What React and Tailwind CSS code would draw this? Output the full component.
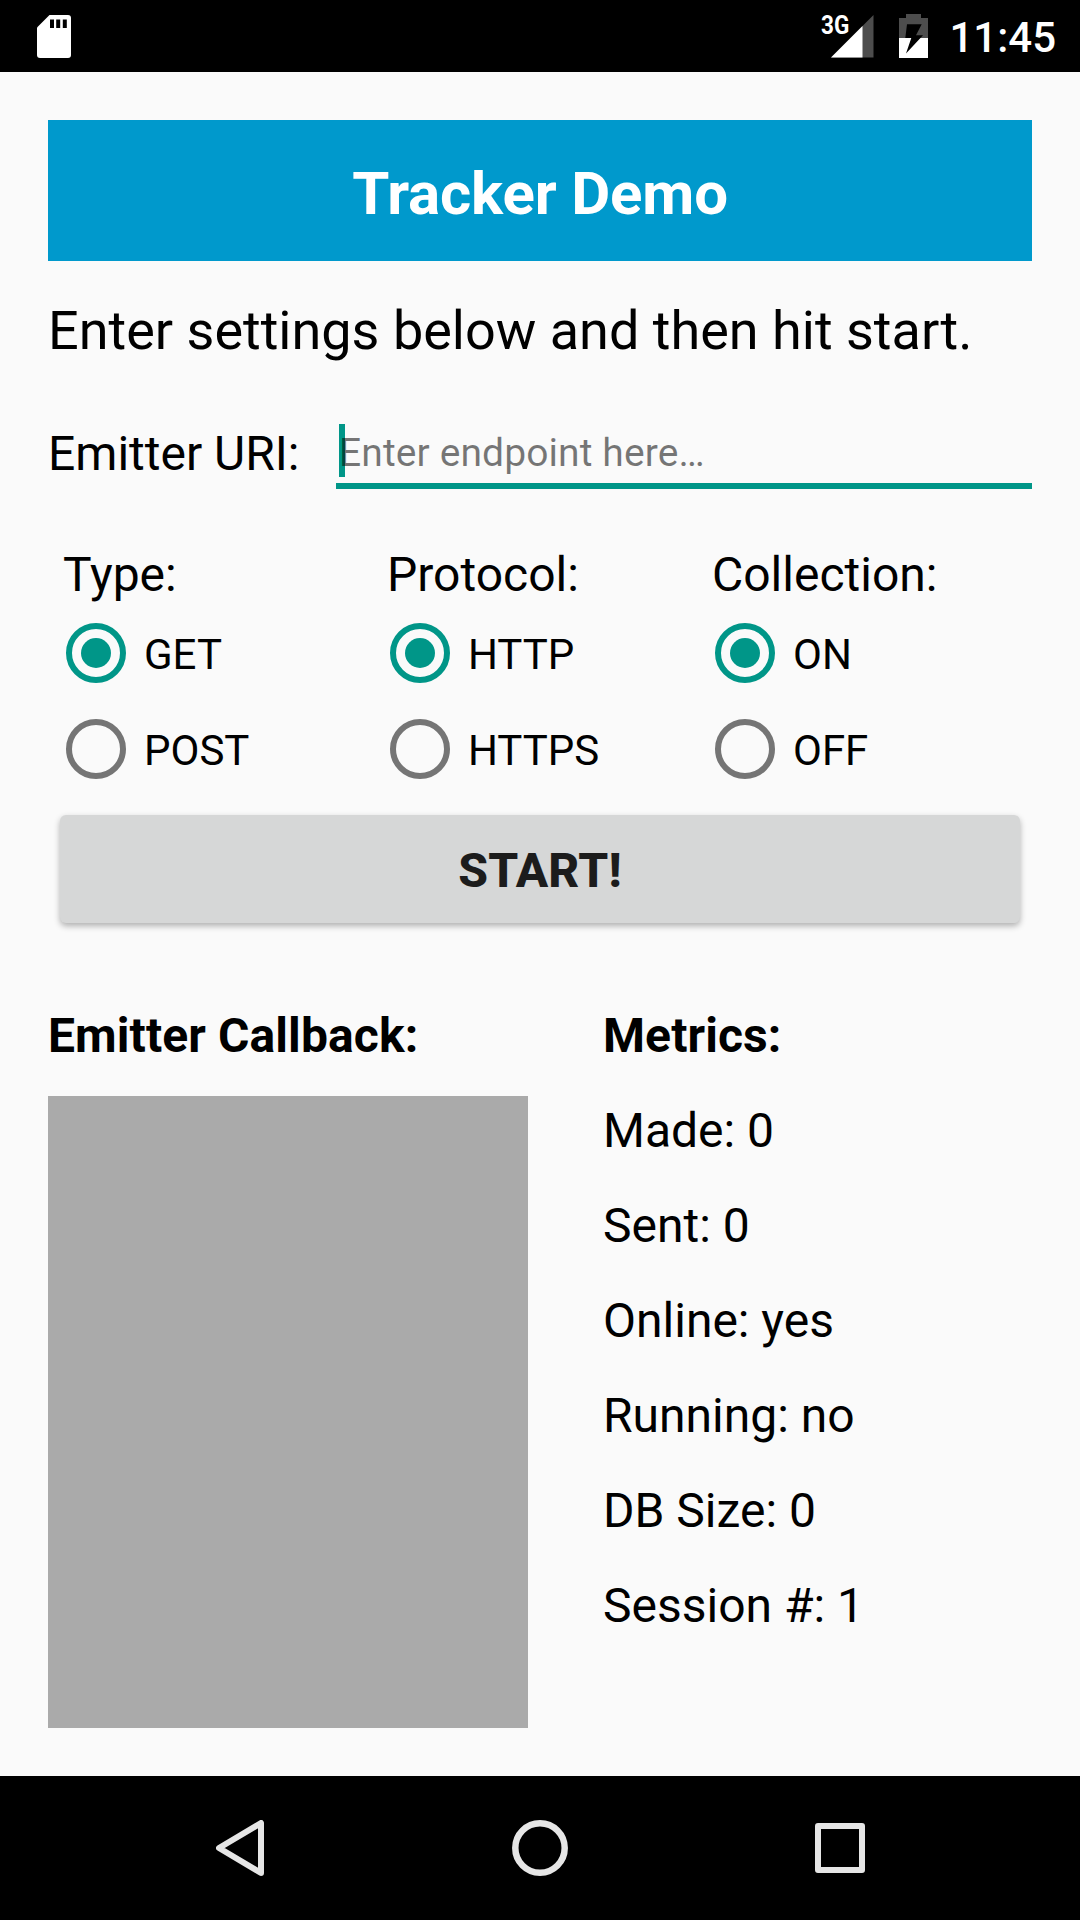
const metrics = ["Made: 0", "Sent: 0", "Online: yes", "Running: no", "DB Size: 0", "Session #: 1"];
const groups = [
  { title: "Type:", options: ["GET", "POST"] },
  { title: "Protocol:", options: ["HTTP", "HTTPS"] },
  { title: "Collection:", options: ["ON", "OFF"] },
];

function Radio({ label, checked }) {
  return (
    <div className="flex h-24 items-center">
      <svg width="96" height="96" viewBox="0 0 96 96" className={checked ? "text-[#009688]" : "text-[#757575]"}>
        <circle cx="48" cy="48" r="27" fill="none" stroke="currentColor" strokeWidth="6" />
        {checked && <circle cx="48" cy="48" r="15" fill="currentColor" />}
      </svg>
      <span className="pt-[3px] text-[42px] leading-[49px]">{label}</span>
    </div>
  );
}

function StatusBar() {
  return (
    <header className="flex h-[72px] items-center justify-between bg-black pl-[37px] pr-6 text-white">
      <svg width="34" height="43" viewBox="0 0 34 43">
        <path d="M12.5 0H31a3 3 0 0 1 3 3V40a3 3 0 0 1-3 3H3a3 3 0 0 1-3-3V12.5Z" fill="#fff" />
        <path d="M13 4.500h4v8.500h-4zM19.200 4.500h4v8.500h-4zM25.800 4.500h4v8.500h-4z" fill="#000" />
      </svg>
      <div className="flex items-center">
        <div className="flex h-[43px] w-[53px] items-start">
          <span className="w-[28px] origin-left scale-x-[0.9] whitespace-nowrap text-[25px] font-bold leading-[21px]">3G</span>
          <svg width="43" height="43" viewBox="0 0 43 43" className="-ml-[18px] shrink-0">
            <path d="M42.500 0V42.500H0Z" fill="#4d4d4d" />
            <path d="M31.500 11V42.500H0Z" fill="#fff" />
          </svg>
        </div>
        <svg width="29" height="44" viewBox="0 0 29 44" className="ml-[25px]">
          <path d="M7 0h15v4h7v20H0V4h7Z" fill="#4d4d4d" />
          <path d="M0 24h29v20H0Z" fill="#fff" />
          <path d="M8 10.300H22.700L17 21.300H24L7 39.500L12.300 24H6.300Z" fill="#000" />
        </svg>
        <span className="ml-[21px] pt-[2px] text-[42px] font-medium leading-[49px]">11:45</span>
      </div>
    </header>
  );
}

function NavBar() {
  return (
    <footer className="flex h-36 items-center bg-black pl-[216px] text-[#e6e6e6]">
      <svg width="48" height="56" viewBox="0 0 48 56" fill="none" stroke="currentColor" strokeWidth="6" strokeLinejoin="round">
        <path d="M45 3V53L3 28Z" />
      </svg>
      <svg width="56" height="56" viewBox="0 0 56 56" fill="none" stroke="currentColor" strokeWidth="6.500" className="ml-[248px]">
        <circle cx="28" cy="28" r="24.700" />
      </svg>
      <svg width="50" height="50" viewBox="0 0 50 50" fill="none" stroke="currentColor" strokeWidth="6" strokeLinejoin="round" className="ml-[247px]">
        <path d="M3 3H47V47H3Z" />
      </svg>
    </footer>
  );
}

export default function App() {
  return (
    <div className="flex h-[1920px] w-[1080px] flex-col bg-[#fafafa] font-['Roboto',sans-serif] text-black">
      <StatusBar />
      <main className="flex h-[1704px] flex-col p-12">
        <h1 className="flex h-[141px] shrink-0 items-center justify-center bg-[#0099cc] pt-[6px] text-[60px] font-bold tracking-[-0.15px] text-white">
          Tracker Demo
        </h1>
        <p className="mt-[34px] text-[54px] leading-[72px]">Enter settings below and then hit start.</p>
        <div className="mt-[42px] flex h-20">
          <span className="w-[288px] pt-[9px] text-[48px] leading-[71px]">Emitter URI:</span>
          <div className="relative flex-1 border-b-[6px] border-[#009688] pl-[3px] pt-[11px] text-[39px] leading-[66px] tracking-[0.1px] text-black/53">
            <i className="absolute left-[3px] top-[15px] h-[53px] w-[6px] bg-[#009688]" />
            <span className="relative">Enter endpoint here…</span>
          </div>
        </div>
        <div className="mt-[54px] grid grid-cols-[324px_325px_325px]">
          {groups.map((g) => (
            <div key={g.title}>
              <div className="h-[62px] pl-[15px] text-[48px] leading-[64px]">{g.title}</div>
              {g.options.map((o, i) => <Radio key={o} label={o} checked={i === 0} />)}
            </div>
          ))}
        </div>
        <button className="mx-3 mt-[18px] h-[108px] shrink-0 rounded-md bg-[#d6d7d7] pt-[3px] text-[48px] font-extrabold tracking-[0.2px] text-[#1c1c1c] shadow-[0_3px_6px_rgba(0,0,0,0.3)]">
          START!
        </button>
        <div className="mt-[81px] flex">
          <section className="w-[555px] text-[48px] font-bold">
            <h2 className="h-[92px] leading-[64px] tracking-[0.1px]">Emitter Callback:</h2>
            <div className="h-[632px] w-[480px] bg-[#aaaaaa]" />
          </section>
          <section className="text-[48px] leading-[64px]">
            <h2 className="h-[95px] font-bold tracking-[0.1px]">Metrics:</h2>
            {metrics.map((m) => <div key={m} className="h-[95px]">{m}</div>)}
          </section>
        </div>
      </main>
      <NavBar />
    </div>
  );
}
